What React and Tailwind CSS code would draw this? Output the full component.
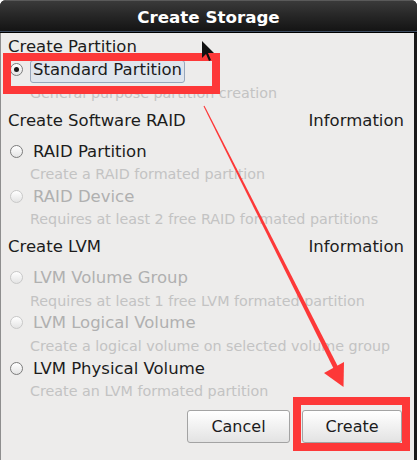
import React from 'react';

const FONT = { fontFamily: '"DejaVu Sans", Verdana, sans-serif' };

function Radio({ checked, disabled }) {
  return (
    <span
      className={`mt-[5px] ml-[9px] w-[13px] h-[13px] shrink-0 rounded-full border flex items-center justify-center bg-gradient-to-b from-white to-[#e4e4e4] ${
        disabled ? 'border-[#c8c8c8]' : 'border-[#7c7c7c]'
      }`}
    >
      {checked && <span className="w-[5px] h-[5px] rounded-full bg-[#1a1a1a]" />}
    </span>
  );
}

function Header({ title, info, h }) {
  return (
    <div className={`${h} flex justify-between pl-[7px] pr-[10px] text-[16.5px] leading-[23px] text-[#1c1c1c] whitespace-nowrap`}>
      <span>{title}</span>
      {info && <span>Information</span>}
    </div>
  );
}

function Option({ label, disabled, h }) {
  return (
    <div className={`${h} flex items-start`}>
      <Radio disabled={disabled} />
      <span className={`ml-[10px] text-[16.5px] leading-[23px] whitespace-nowrap ${disabled ? 'text-[#b0b0b0]' : 'text-[#1c1c1c]'}`}>
        {label}
      </span>
    </div>
  );
}

function Desc({ text, h }) {
  return <div className={`${h} pl-[29px] text-[14.3px] leading-[24px] text-[#c3c3c3] whitespace-nowrap`}>{text}</div>;
}

export default function App() {
  return (
    <div className="w-[417px] h-[460px] bg-white relative overflow-hidden" style={FONT}>
      <div className="h-full flex flex-col rounded-t-[6px] overflow-hidden bg-[#1a1a1a]">
        <div className="h-[31px] shrink-0 flex items-center justify-center bg-gradient-to-b from-[#3a3a3a] via-[#262626] to-[#141414] border-t border-[#5a5a5a]">
          <span className="text-white font-bold text-[16.7px] leading-none mt-[3px]">Create Storage</span>
        </div>
        <div className="h-px shrink-0 bg-[#3f4e63]" />
        <div className="h-px shrink-0 bg-black" />

        <div className="flex-1 flex flex-col pt-[2px] mr-[3px] bg-[#edeceb] border-l border-[#8e8e8e]">
          <Header title="Create Partition" h="h-[23px]" />
          <div className="h-[23px] flex items-start">
            <Radio checked />
            <span className="ml-[7px] mt-[2px] h-[23px] px-[2px] leading-[18px] text-[16.5px] text-[#1c1c1c] border border-[#98a7bb] rounded-[3px] bg-[#dfe5ed] whitespace-nowrap">
              Standard Partition
            </span>
          </div>
          <Desc text="General purpose partition creation" h="h-[28px]" />

          <Header title="Create Software RAID" info h="h-[31px]" />
          <Option label="RAID Partition" h="h-[22px]" />
          <Desc text="Create a RAID formated partition" h="h-[23px]" />
          <Option label="RAID Device" disabled h="h-[22px]" />
          <Desc text="Requires at least 2 free RAID formated partitions" h="h-[28px]" />

          <Header title="Create LVM" info h="h-[31px]" />
          <Option label="LVM Volume Group" disabled h="h-[23px]" />
          <Desc text="Requires at least 1 free LVM formated partition" h="h-[22px]" />
          <Option label="LVM Logical Volume" disabled h="h-[23px]" />
          <Desc text="Create a logical volume on selected volume group" h="h-[23px]" />
          <Option label="LVM Physical Volume" h="h-[22px]" />
          <Desc text="Create an LVM formated partition" h="h-[23px]" />

          <div className="mt-[8px] flex justify-end gap-[12px] pr-[12px]">
            <button className="w-[103px] h-[33px] rounded-[3px] border border-[#a3a3a3] bg-gradient-to-b from-white to-[#e3e3e3] text-[16px] text-[#1c1c1c]">
              Cancel
            </button>
            <button className="w-[100px] h-[33px] rounded-[3px] border border-[#a3a3a3] bg-gradient-to-b from-white to-[#e3e3e3] text-[16px] text-[#1c1c1c]">
              Create
            </button>
          </div>
        </div>
      </div>

      {/* annotation overlay */}
      <div className="absolute left-[3px] top-[53px] w-[217px] h-[41px] border-[8px] border-[#fd3838] pointer-events-none" />
      <div className="absolute left-[293px] top-[397px] w-[117px] h-[54px] border-[8px] border-[#fd3838] pointer-events-none" />
      <svg className="absolute inset-0 pointer-events-none" width="417" height="460" viewBox="0 0 417 460">
        <polygon points="204.5,105.7 339.2,368.9 334.8,371.1 203.5,106.3" fill="#fd3838" />
        <polygon points="324,373 344,362 343.5,387" fill="#fd3838" />
        <polygon points="202,41 202,58 206,54 209,61 211,60 208,53 214,53" fill="#111" />
      </svg>
    </div>
  );
}
